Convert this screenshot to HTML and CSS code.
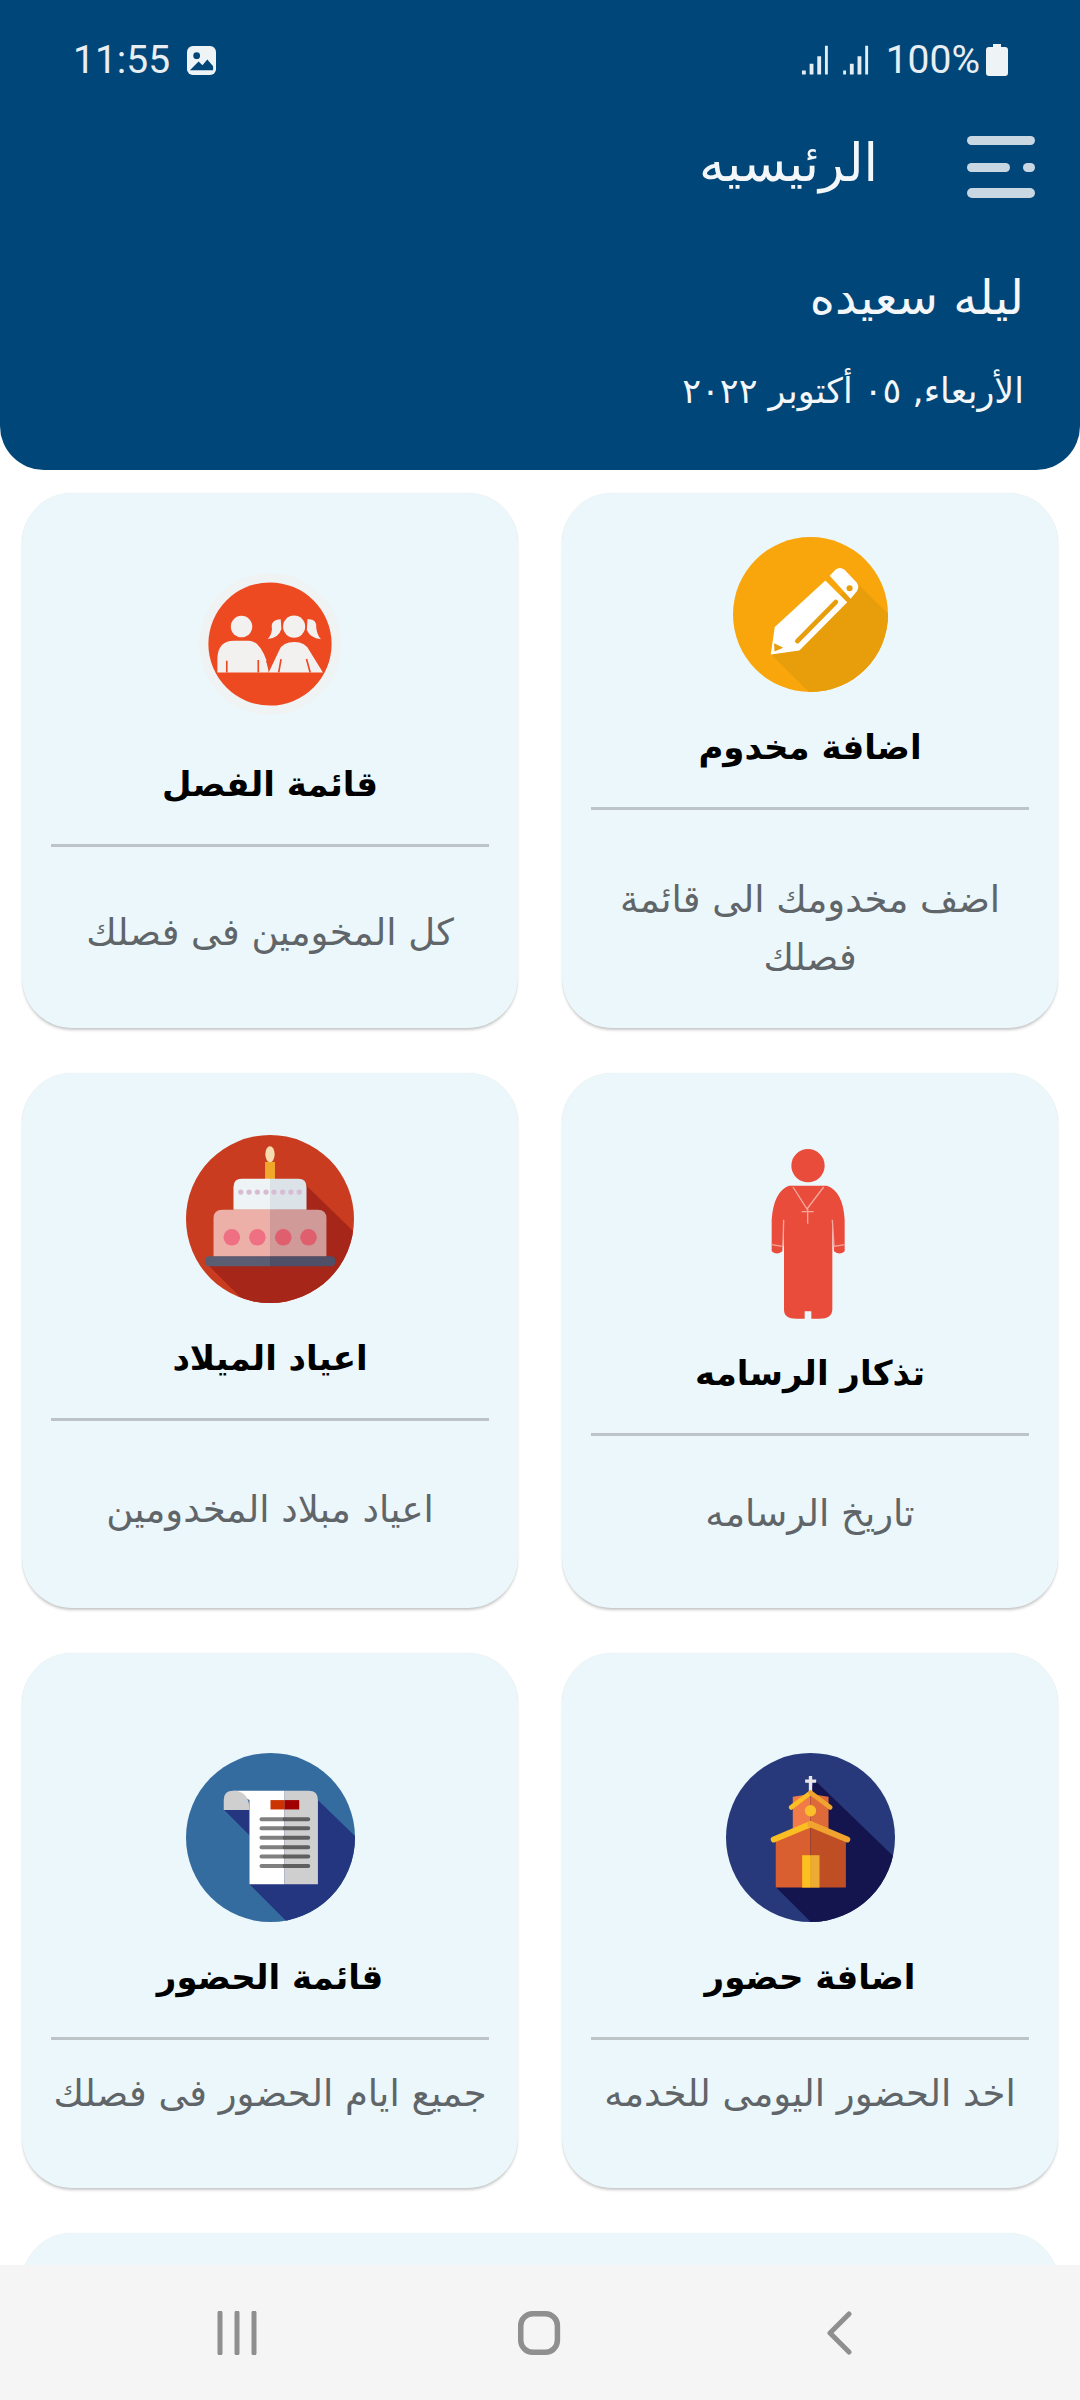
FILE: index.html
```html
<!DOCTYPE html>
<html lang="ar" dir="rtl">
<head>
<meta charset="UTF-8">
<title>الرئيسيه</title>
<link rel="stylesheet" href="styles.css">
</head>
<body>
<div class="page">
	<header class="top">
		<div class="status" dir="ltr">
			<span class="clock">11:55</span>
			<svg class="pic" viewBox="0 0 30 30"><rect width="30" height="30" rx="6" fill="#eef3f6"/><circle cx="10" cy="10" r="3.5" fill="#014678"/><path d="M3 25 L12 16 L16 20 L21 14 L27 21 V25 Z" fill="#014678"/></svg>
			<span class="grow"></span>
			<svg class="signal" viewBox="0 0 72 32"><path d="M1 27h4v4H1zM9 20h4v11H9zM17 12h4v19h-4zM25 1h3v30h-3zM44 27h3v4h-3zM51 20h4v11h-4zM59 12h4v19h-4zM67 1h3v30h-3z" fill="#e6edf2"/></svg>
			<span class="pct">100%</span>
			<svg class="batt" viewBox="0 0 22 32"><path d="M7 0h8v3h4a3 3 0 0 1 3 3v23a3 3 0 0 1-3 3H3a3 3 0 0 1-3-3V6a3 3 0 0 1 3-3h4z" fill="#eef3f6"/></svg>
		</div>
		<div class="bar">
			<svg class="menu" viewBox="0 0 68 62"><rect y="0" width="68" height="9" rx="4.5"/><rect y="27" width="43" height="9" rx="4.5"/><rect x="56" y="27" width="12" height="9" rx="4.5"/><rect y="52" width="68" height="10" rx="5"/></svg>
			<h1 class="page-title">الرئيسيه</h1>
		</div>
		<div class="greet">ليله سعيده</div>
		<div class="today">الأربعاء, ٠٥ أكتوبر ٢٠٢٢</div>
	</header>

	<main class="cards">
		<section class="card">
			<svg class="icon icon-pencil" viewBox="101 83 460 460">
				<defs><clipPath id="c1"><circle cx="331" cy="313" r="230"/></clipPath></defs>
				<circle cx="331" cy="313" r="230" fill="#f8a60c"/>
				<path d="M465 215 L600 350 V600 H383 L213 430 Z" fill="#e89d0a" clip-path="url(#c1)"/>
				<path d="M225 350 L375 212 L440 277 L298 420 L213 432 Z" fill="#fff"/>
				<path d="M388 198 L405 180 Q418 170 432 180 L468 218 Q478 232 468 245 L450 266 Z" fill="#fff"/>
				<path d="M223 398 L250 412 L224 423 Z" fill="#e89d0a"/>
				<path d="M292 392 L406 276" stroke="#e89d0a" stroke-width="14" stroke-linecap="round"/>
				<circle cx="447" cy="235" r="9" fill="#e89d0a"/>
			</svg>
			<h2 class="card-title">اضافة مخدوم</h2>
			<hr class="line">
			<p class="card-text text-low">اضف مخدومك الى قائمة فصلك</p>
		</section>

		<section class="card">
			<svg class="icon icon-kids" viewBox="60 38 424 424">
				<circle cx="272" cy="250" r="212" fill="#f0f3f3"/>
				<circle cx="272" cy="250" r="184" fill="#ee4a22"/>
				<g fill="#f3f1f0">
					<circle cx="187" cy="198" r="32"/>
					<path d="M115 335 V292 Q117 240 165 240 H210 Q240 240 262 300 L268 335 Z"/>
					<circle cx="344" cy="198" r="33"/>
					<path d="M304 176 Q272 178 278 205 Q276 225 265 235 Q298 232 306 205 Z"/>
					<path d="M384 176 Q412 174 410 200 Q412 222 424 236 Q392 232 382 208 Z"/>
					<path d="M268 335 Q285 300 300 268 Q310 244 345 244 Q378 244 390 270 L430 335 Z"/>
				</g>
				<path d="M143 300 V335 M237 298 V335 M305 295 L298 335 M381 295 L392 335" stroke="#ee4a22" stroke-width="5"/>
				<path d="M262 300 L270 322" stroke="#ee4a22" stroke-width="5"/>
			</svg>
			<h2 class="card-title">قائمة الفصل</h2>
			<hr class="line">
			<p class="card-text text-up1">كل المخومين فى فصلك</p>
		</section>

		<section class="card">
			<svg class="icon icon-priest" viewBox="196 88 270 510">
				<circle cx="325" cy="138" r="50" fill="#ea4c3c"/>
				<path d="M268 198 H382 Q430 215 435 300 V395 Q420 408 403 395 L398 300 V570 Q396 597 360 597 H335 V575 H315 V597 H290 Q253 597 253 570 V300 L248 395 Q232 408 216 395 V300 Q222 215 268 198 Z" fill="#ea4c3c"/>
				<path d="M280 202 L322 268 L372 202 M306 276 H342 M324 268 V312 M252 300 L250 380 M398 300 L403 380 M216 375 L248 380 M403 380 L435 375" fill="none" stroke="#f4a79d" stroke-width="4"/>
			</svg>
			<h2 class="card-title">تذكار الرسامه</h2>
			<hr class="line">
			<p class="card-text text-up2">تاريخ الرسامه</p>
		</section>

		<section class="card">
			<svg class="icon icon-cake" viewBox="135 75 506 506">
				<defs><clipPath id="c2"><circle cx="388" cy="328" r="253"/></clipPath></defs>
				<circle cx="388" cy="328" r="253" fill="#c93c1f"/>
				<path d="M495 225 L700 425 V600 H335 L200 465 Z" fill="#a6261a" clip-path="url(#c2)"/>
				<rect x="373" y="156" width="30" height="54" fill="#f0a72a"/>
				<ellipse cx="388" cy="133" rx="14" ry="24" fill="#f7dcb0"/>
				<path d="M278 300 V232 Q278 207 303 207 H388 V300 Z" fill="#eef3f5"/>
				<path d="M388 207 H473 Q498 207 498 232 V300 H388 Z" fill="#dbe3e8"/>
				<g fill="#d7bcd4"><circle cx="300" cy="247" r="8"/><circle cx="325" cy="247" r="8"/><circle cx="350" cy="247" r="8"/><circle cx="376" cy="247" r="8"/><circle cx="400" cy="247" r="8"/><circle cx="426" cy="247" r="8"/><circle cx="451" cy="247" r="8"/><circle cx="476" cy="247" r="8"/></g>
				<path d="M218 442 V326 Q218 300 244 300 H388 V442 Z" fill="#ecb0a8"/>
				<path d="M388 300 H532 Q558 300 558 326 V442 H388 Z" fill="#cf9a97"/>
				<circle cx="273" cy="383" r="25" fill="#ef7083"/><circle cx="350" cy="383" r="25" fill="#ef7083"/>
				<circle cx="428" cy="383" r="25" fill="#e05f6f"/><circle cx="504" cy="383" r="25" fill="#e05f6f"/>
				<path d="M205 440 H388 V470 H205 Q192 470 192 455 Q192 440 205 440 Z" fill="#5b5d72"/>
				<path d="M388 440 H572 Q585 440 585 455 Q585 470 572 470 H388 Z" fill="#4f4f68"/>
			</svg>
			<h2 class="card-title">اعياد الميلاد</h2>
			<hr class="line">
			<p class="card-text text-up1">اعياد مبلاد المخدومين</p>
		</section>

		<section class="card">
			<svg class="icon icon-round" viewBox="75 99 506 506">
				<defs><clipPath id="c3"><circle cx="328" cy="352" r="253"/></clipPath></defs>
				<circle cx="328" cy="352" r="253" fill="#27397b"/>
				<path d="M340 180 L640 470 V640 H364 L224 500 Z" fill="#14154f" clip-path="url(#c3)"/>
				<path d="M323 168 h10 v10 h12 v10 h-12 v26 h-10 v-26 h-11 v-10 h11 z" fill="#e9e6ea"/>
				<path d="M275 230 L328 222 V325 H275 Z" fill="#f07a48"/>
				<path d="M328 222 L382 230 V325 H328 Z" fill="#dd6a38"/>
				<path d="M270 262 L328 218" stroke="#fbbf24" stroke-width="14" stroke-linecap="round"/>
				<path d="M328 218 L387 262" stroke="#f0a32f" stroke-width="14" stroke-linecap="round"/>
				<circle cx="328" cy="272" r="17" fill="#fbbd2a"/>
				<path d="M224 350 L328 320 V502 H224 Z" fill="#d95f30"/>
				<path d="M328 320 L434 350 V502 H328 Z" fill="#bf4e24"/>
				<path d="M218 358 L328 312" stroke="#fbbf24" stroke-width="18" stroke-linecap="round"/>
				<path d="M328 312 L438 358" stroke="#f0a32f" stroke-width="18" stroke-linecap="round"/>
				<rect x="303" y="405" width="26" height="97" fill="#fcc021"/>
				<rect x="329" y="405" width="26" height="97" fill="#eeab33"/>
			</svg>
			<h2 class="card-title">اضافة حضور</h2>
			<hr class="line">
			<p class="card-text text-up3">اخد الحضور اليومى للخدمه</p>
		</section>

		<section class="card">
			<svg class="icon icon-round" viewBox="105 99 506 506">
				<defs><clipPath id="c4"><circle cx="358" cy="352" r="253"/></clipPath></defs>
				<circle cx="358" cy="352" r="253" fill="#356c9f"/>
				<path d="M495 235 L660 395 V640 H443 L295 492 V235 Z M218 268 L295 345 V268 Z" fill="#24367f" clip-path="url(#c4)"/>
				<path d="M246 212 H400 V492 H295 V240 Z" fill="#fff"/>
				<path d="M400 212 H472 Q500 212 500 240 V492 H400 Z" fill="#cfcfcf"/>
				<path d="M218 270 V240 Q218 212 246 212 Q295 212 295 270 Z" fill="#cfcfcf"/>
				<rect x="358" y="240" width="42" height="28" fill="#cc3300"/>
				<rect x="400" y="240" width="44" height="28" fill="#a00000"/>
				<path d="M331 297 H400 M331 324 H400 M331 353 H400 M331 381 H400 M331 409 H400 M331 437 H400" stroke="#808080" stroke-width="12" stroke-linecap="round"/>
				<path d="M400 297 H471 M400 324 H471 M400 353 H471 M400 381 H471 M400 409 H471 M400 437 H471" stroke="#5f5f5f" stroke-width="12" stroke-linecap="round"/>
			</svg>
			<h2 class="card-title">قائمة الحضور</h2>
			<hr class="line">
			<p class="card-text text-up3">جميع ايام الحضور فى فصلك</p>
		</section>

		<section class="card card-wide"></section>
	</main>

	<nav class="navbar">
		<svg class="nav-icon" viewBox="0 0 40 44"><path d="M3 2V42M20 2V42M37 2V42" stroke-width="5"/></svg>
		<svg class="nav-icon" viewBox="0 0 50 48"><rect x="3" y="3" width="40" height="42" rx="13" stroke-width="6"/></svg>
		<svg class="nav-icon" viewBox="0 0 28 44"><path d="M24 3 L5 22 L24 41" stroke-width="5"/></svg>
	</nav>
</div>
</body>
</html>
```

FILE: styles.css
```css
* { box-sizing: border-box; }
html, body { margin: 0; padding: 0; background: #fff; }
body { font-family: "DejaVu Sans", sans-serif; }

.page { position: relative; width: 1080px; height: 2400px; overflow: hidden; }

/* header */
.top { height: 470px; background: #014678; color: #f4f7f9; border-radius: 0 0 44px 44px; }
.status { display: flex; align-items: center; height: 120px; padding: 0 72px 0 73px; font-family: Roboto, sans-serif; font-size: 39px; }
.clock { color: #e8eef2; }
.pic { width: 29px; height: 29px; margin-left: 17px; }
.grow { flex: 1; }
.signal { width: 69px; height: 32px; }
.pct { margin-left: 16px; color: #e8eef2; }
.batt { width: 22px; height: 32px; margin-left: 6px; }

.bar { display: flex; align-items: center; height: 94px; padding-right: 45px; }
.menu { width: 68px; height: 62px; fill: #c9d7e3; }
.page-title { margin: 0 89px 8px 0; font-size: 52px; font-weight: normal; line-height: 86px; }
.greet { margin-top: 50px; padding-right: 56px; font-size: 48px; line-height: 66px; }
.today { margin-top: 36px; padding-right: 56px; font-size: 35px; line-height: 50px; }

/* cards */
.cards { display: grid; grid-template-columns: 496px 496px; grid-auto-rows: 535px; gap: 45px 44px; padding: 23px 22px 0; }
.card { display: flex; flex-direction: column; align-items: center; background: #ebf7fa; border-radius: 50px; box-shadow: 0 3px 3px -1px rgba(0, 0, 0, .22), 0 0 1px rgba(0, 0, 0, .12); padding: 0 29px; }
.card-wide { grid-column: span 2; }
.icon { display: block; flex: none; margin-bottom: 25px; }
.icon-pencil { width: 155px; height: 155px; margin-top: 44px; }
.icon-kids { width: 142px; height: 142px; margin-top: 80px; margin-bottom: 39px; }
.icon-priest { width: 90px; height: 170px; margin-top: 76px; margin-bottom: 24px; filter: blur(.6px); }
.icon-cake { width: 168px; height: 168px; margin-top: 62px; }
.icon-round { width: 169px; height: 169px; margin-top: 100px; }
.card-title { margin: 0 0 30px; font-size: 34px; line-height: 60px; font-weight: bold; color: #000; white-space: nowrap; }
.line { width: 100%; height: 3px; margin: 0; border: 0; background: #bcc4c8; flex: none; }
.card-text { flex: 1; display: flex; align-items: center; justify-content: center; margin: 0; font-size: 37px; line-height: 58px; color: #5f6569; text-align: center; }
.text-low { padding-top: 20px; }
.text-up1 { padding-bottom: 10px; }
.text-up2 { padding-bottom: 16px; }
.text-up3 { padding-bottom: 40px; }

/* system navigation */
.navbar { position: absolute; left: 0; right: 0; bottom: 0; height: 135px; background: #f5f5f5; display: flex; align-items: center; justify-content: space-between; direction: ltr; padding: 0 227px 0 217px; }
.nav-icon { height: 44px; width: auto; fill: none; stroke: #8f8f8f; stroke-linecap: round; stroke-linejoin: round; }
```
